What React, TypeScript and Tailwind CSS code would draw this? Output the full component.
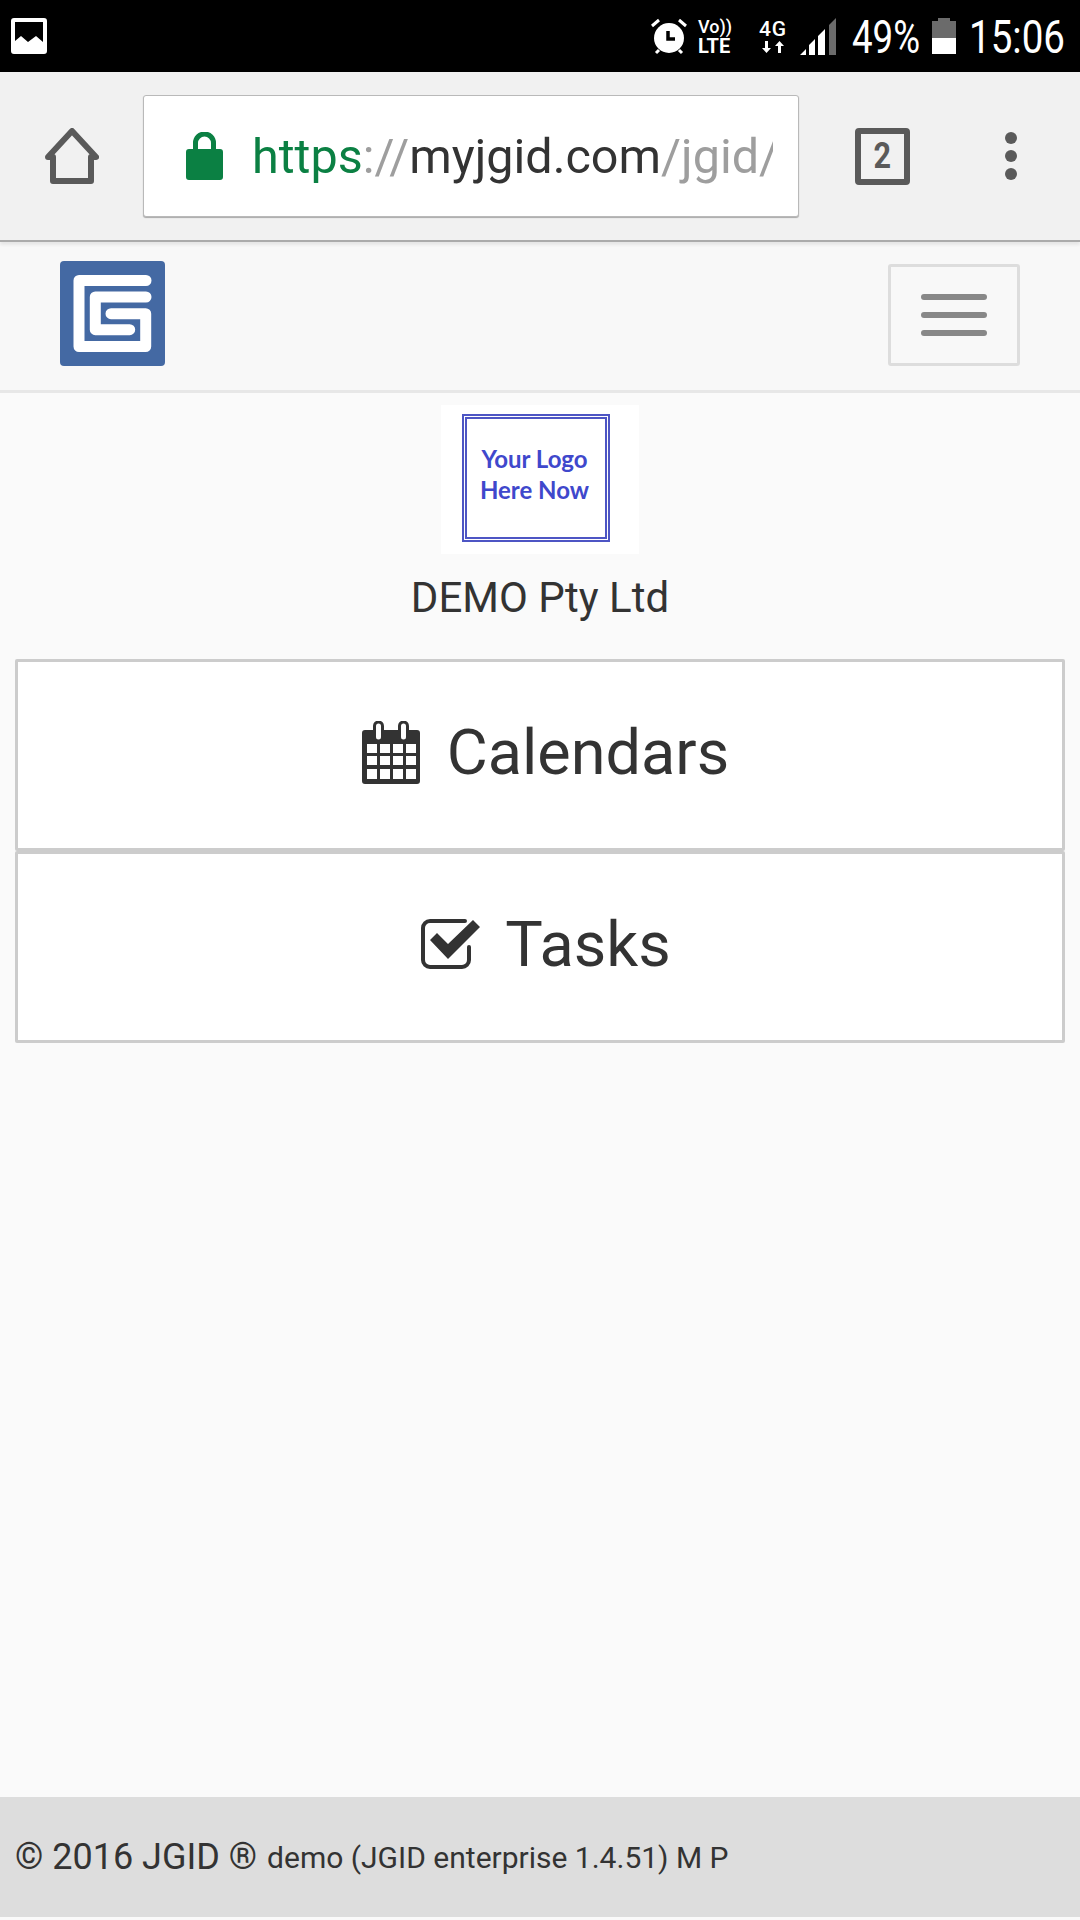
// Mobile browser screenshot: status bar, chrome toolbar, then the JGID home page

function StatusBar() {
  return (
    <div className="h-[72px] bg-black flex items-center pl-[11px] pr-[15px] text-white shrink-0">
      <svg width="36" height="36" viewBox="0 0 36 36">
        <path fill="#fff" fillRule="evenodd" d="M3 0h30a3 3 0 0 1 3 3v30a3 3 0 0 1-3 3H3a3 3 0 0 1-3-3V3a3 3 0 0 1 3-3zM4 4v19l6-5 7 6 8-6 7 6V4z" />
      </svg>
      <div className="flex-1" />
      <svg width="38" height="38" viewBox="0 0 38 38">
        <circle cx="19" cy="21" r="15" fill="#fff" />
        <path d="M18 14v8h7" stroke="#000" strokeWidth="3.500" fill="none" />
        <path d="M2 9l7-6M36 9l-7-6M6 36l3-3M32 36l-3-3" stroke="#fff" strokeWidth="3" />
      </svg>
      <div className="ml-[10px] w-[40px] flex flex-col items-start leading-none font-medium">
        <span className="text-[18px] h-[18px]">Vo))</span>
        <span className="text-[20px] font-bold h-[18px]">LTE</span>
      </div>
      <div className="ml-[20px] w-[30px] flex flex-col items-center leading-none font-medium">
        <span className="text-[21px] h-[21px] tracking-[1px]">4G</span>
        <svg width="24" height="14" viewBox="0 0 24 14">
          <path fill="#fff" d="M4 1h3v7h3l-4.500 5L1 8h3zM17 13h3V6h3l-4.500-5L14 6h3z" />
        </svg>
      </div>
      <svg className="ml-[12px]" width="37" height="38" viewBox="0 0 37 38">
        <path fill="#6b6b6b" d="M29 8l7-7v37h-7z" />
        <path fill="#fff" d="M0 38l6-6v6zM9 38V28l6-6v16zM18 38V19l7-7v26z" />
      </svg>
      <span className="ml-[15px] text-[47px] leading-none w-[70px] font-normal origin-left scale-x-[0.78] whitespace-nowrap">49%</span>
      <div className="ml-[10px] w-[24px] h-[36px] flex flex-col">
        <div className="mx-[6px] h-[3px] bg-[#6b6b6b]" />
        <div className="h-[17px] bg-[#6b6b6b]" />
        <div className="flex-1 bg-white" />
      </div>
      <span className="ml-[13px] text-[47px] leading-none w-[96px] font-normal origin-left scale-x-[0.82] whitespace-nowrap">15:06</span>
    </div>
  );
}

function BrowserBar() {
  return (
    <div className="relative z-10 h-[170px] bg-[#f1f1f1] border-b-[2px] border-[#ababab] shadow-[0_3px_3px_rgba(0,0,0,0.07)] flex items-center shrink-0">
      <div className="w-[143px] flex justify-center pl-[1px]">
        <svg width="54" height="56" viewBox="0 0 54 56" fill="none" stroke="#5a5a5a" strokeWidth="6" strokeLinejoin="round" strokeLinecap="round">
          <path d="M3 29L27 3l24 26h-5v24H8V29z" />
        </svg>
      </div>
      <div className="w-[656px] h-[122px] bg-white rounded-[3px] border border-[#b9b9b9] shadow-[0_1px_1px_rgba(0,0,0,0.3)] flex items-center pl-[42px]">
        <svg className="shrink-0" width="37" height="48" viewBox="0 0 37 48">
          <path fill="#0b8043" d="M3 17h4v-6a11.500 11.500 0 0 1 23 0v6h4a3 3 0 0 1 3 3v25a3 3 0 0 1-3 3H3a3 3 0 0 1-3-3V20a3 3 0 0 1 3-3zM12 17h13v-6a6.500 6.500 0 0 0-13 0z" />
        </svg>
        <div className="ml-[29px] mt-[2px] w-[521px] overflow-hidden whitespace-nowrap text-[48.500px] leading-[60px] text-[#9e9e9e]">
          <span className="text-[#0b8043]">https</span>://<span className="text-[#333]">myjgid.com</span>/jgid/
        </div>
      </div>
      <div className="ml-[56px] w-[55px] h-[57px] border-[6px] border-[#5a5a5a] rounded-[4px] flex items-center justify-center text-[#5a5a5a] text-[36px] leading-none font-bold">
        <span className="scale-x-[0.85]">2</span>
      </div>
      <div className="ml-[95px] flex flex-col gap-[6px]">
        <div className="w-[12px] h-[12px] rounded-full bg-[#5a5a5a]" />
        <div className="w-[12px] h-[12px] rounded-full bg-[#5a5a5a]" />
        <div className="w-[12px] h-[12px] rounded-full bg-[#5a5a5a]" />
      </div>
    </div>
  );
}

function BrandLogo() {
  return (
    <svg width="105" height="105" viewBox="0 0 105 105">
      <rect width="105" height="105" rx="4" fill="#4469a3" />
      <g fill="none" stroke="#fff" strokeWidth="11" strokeLinecap="round" strokeLinejoin="round">
        <path d="M86 19.500H19v66h66.700V52.700H51" />
        <path d="M86 36H35.300v32.700h34.400" />
      </g>
    </svg>
  );
}

function NavBar() {
  return (
    <div className="h-[151px] bg-[#f8f8f8] border-b-[3px] border-[#e7e7e7] flex items-start justify-between px-[60px] pt-[19px] shrink-0">
      <BrandLogo />
      <div className="mt-[3px] w-[132px] h-[102px] border-[3px] border-[#ddd] rounded-[3px] flex flex-col items-center justify-center gap-[12px]">
        <div className="w-[66px] h-[6px] rounded-[3px] bg-[#888]" />
        <div className="w-[66px] h-[6px] rounded-[3px] bg-[#888]" />
        <div className="w-[66px] h-[6px] rounded-[3px] bg-[#888]" />
      </div>
    </div>
  );
}

function CalendarIcon() {
  return (
    <svg width="58" height="63" viewBox="0 0 58 63">
      <path fill="#333" fillRule="evenodd" d="M3 9h8V5a5 5 0 0 1 11 0v4h14V5a5 5 0 0 1 11 0v4h8a3 3 0 0 1 3 3v48a3 3 0 0 1-3 3H3a3 3 0 0 1-3-3V12a3 3 0 0 1 3-3zM14 5v11a2 2 0 0 0 5 0V5a2 2 0 0 0-5 0zM39 5v11a2 2 0 0 0 5 0V5a2 2 0 0 0-5 0zM5 23v9h10v-9zM18 23v9h10v-9zM31 23v9h10v-9zM44 23v9h10v-9zM5 35v9h10v-9zM18 35v9h10v-9zM31 35v9h10v-9zM44 35v9h10v-9zM5 48v10h10V48zM18 48v10h10V48zM31 48v10h10V48zM44 48v10h10V48z" />
    </svg>
  );
}

function CheckIcon() {
  return (
    <svg width="60" height="50" viewBox="0 0 60 50">
      <path fill="none" stroke="#333" strokeWidth="4" strokeLinecap="round" d="M44 2H9a7 7 0 0 0-7 7v32a7 7 0 0 0 7 7h32a7 7 0 0 0 7-7V28" />
      <path fill="#333" d="M9 21l7-7 11 11L52 1l7 7-32 32z" />
    </svg>
  );
}

function BigButton({ icon, label, boxClass, textClass }: { icon: React.ReactNode; label: string; boxClass: string; textClass: string }) {
  return (
    <div className={`h-[192px] bg-white border-[3px] border-[#ccc] rounded-[2px] flex items-center justify-center pb-[6px] ${boxClass}`}>
      {icon}
      <span className={`text-[63px] leading-none text-[#333] ${textClass}`}>{label}</span>
    </div>
  );
}

export default function App() {
  return (
    <div className="w-[1080px] h-[1920px] flex flex-col bg-[#fafafa] overflow-hidden [font-family:Roboto,sans-serif]">
      <StatusBar />
      <BrowserBar />
      <NavBar />

      <div className="flex flex-col items-center pt-[12px]">
        <div className="w-[198px] h-[149px] bg-white flex items-center pl-[21px]">
          <div className="w-[148px] h-[128px] border-[5px] border-double border-[#4d55c4] flex flex-col items-center justify-center pb-[8px] pr-[3px] text-[#3f48cc] text-[24px] leading-[31px] font-bold [font-family:Lato,sans-serif] mb-[3px]">
            <span>Your Logo</span>
            <span>Here Now</span>
          </div>
        </div>
        <div className="mt-[19px] text-[42px] leading-[50px] text-[#333]">DEMO Pty Ltd</div>
      </div>

      <div className="mt-[36px] mx-[15px] flex flex-col">
        <BigButton icon={<CalendarIcon />} label="Calendars" boxClass="pl-[11px]" textClass="ml-[27px]" />
        <BigButton icon={<CheckIcon />} label="Tasks" boxClass="pl-[12px]" textClass="ml-[24px]" />
      </div>

      <div className="flex-1" />

      <div className="h-[120px] mb-[3px] bg-[#ddd] flex items-center pl-[15px] text-[#333] whitespace-nowrap">
        <span className="text-[36px]">© 2016 JGID ®</span>
        <span className="ml-[10px] text-[30px]">demo (JGID enterprise 1.4.51) M P</span>
      </div>
    </div>
  );
}
